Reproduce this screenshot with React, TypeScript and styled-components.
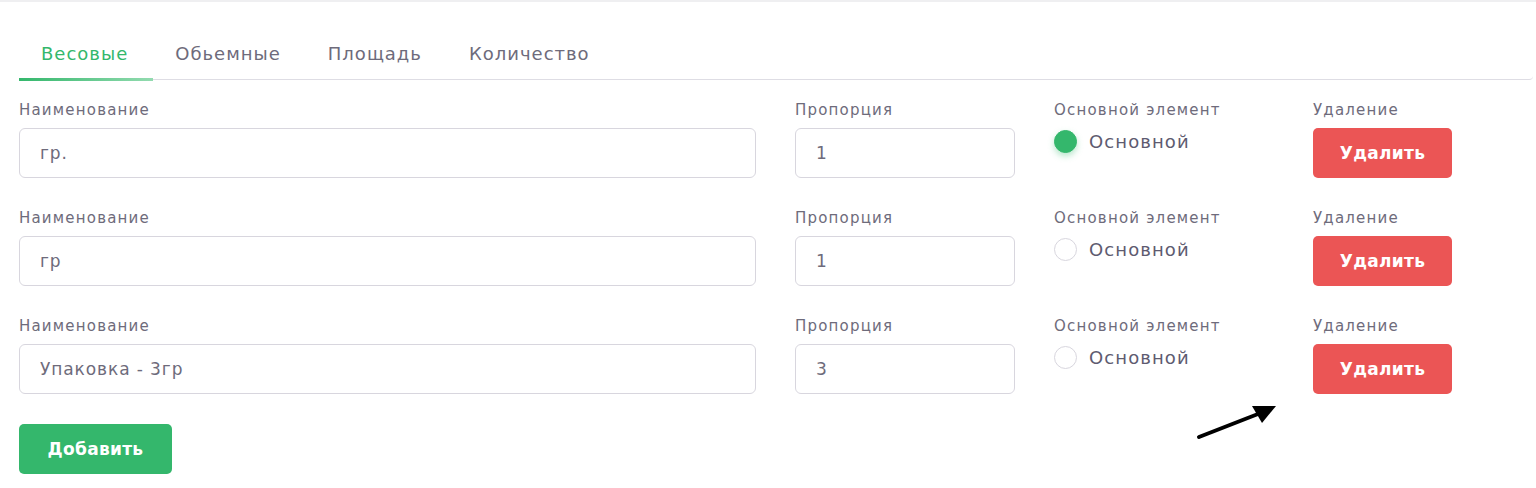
import styled, { createGlobalStyle } from "styled-components";

const GlobalStyle = createGlobalStyle`
  body {
    margin: 0;
    background: #ffffff;
    font-family: "DejaVu Sans", "Noto Sans", sans-serif;
  }
`;

const tabs = ["Весовые", "Обьемные", "Площадь", "Количество"];

const rows = [
  { name: "гр.", proportion: "1", main: true },
  { name: "гр", proportion: "1", main: false },
  { name: "Упаковка - 3гр", proportion: "3", main: false },
];

const Field = ({ label, children }) => (
  <Column>
    <Label>{label}</Label>
    {children}
  </Column>
);

const UnitRow = ({ row }) => (
  <Row>
    <Field label="Наименование">
      <Input defaultValue={row.name} />
    </Field>

    <Field label="Пропорция">
      <Input defaultValue={row.proportion} />
    </Field>

    <Field label="Основной элемент">
      <RadioLabel>
        <Radio checked={row.main} />
        Основной
      </RadioLabel>
    </Field>

    <Field label="Удаление">
      <Button color="#eb5555">Удалить</Button>
    </Field>
  </Row>
);

const App = () => {
  return (
    <>
      <GlobalStyle />
      <Card>
        <TabBar>
          {tabs.map((tab, i) => (
            <Tab key={tab} active={i === 0}>{tab}</Tab>
          ))}
        </TabBar>

        <Rows>
          {rows.map((row, i) => (
            <UnitRow key={i} row={row} />
          ))}
        </Rows>

        <Button color="#34b76c" wide>Добавить</Button>

        <Arrow width="90" height="40" viewBox="0 0 90 40">
          <line x1="3" y1="36" x2="62" y2="13" stroke="#000" strokeWidth="4" strokeLinecap="round" />
          <polygon points="80,5 56,5 66,22" fill="#000" />
        </Arrow>
      </Card>
    </>
  );
};

const Card = styled.div`
  position: relative;
  border-top: 2px solid #efeff1;
  padding: 39px 3px 14px 19px;
  height: 488px;
  box-sizing: border-box;
`;

const TabBar = styled.div`
  display: flex;
  border-bottom: 1px solid #dedde4;
  border-bottom-right-radius: 4px;
  margin-bottom: 20px;
`;

const Tab = styled.div<{ active?: boolean }>`
  position: relative;
  padding: 1px 25px 13px 22px;
  font-size: 18px;
  line-height: 24px;
  letter-spacing: 1px;
  color: ${p => (p.active ? "#34b76c" : "#6e6b7b")};

  &::after {
    content: "";
    display: ${p => (p.active ? "block" : "none")};
    position: absolute;
    left: 0;
    right: 0;
    bottom: -2px;
    height: 3px;
    background: linear-gradient(90deg, #34b76c, #93dbb0);
  }
`;

const Rows = styled.div`
  display: flex;
  flex-direction: column;
  gap: 30px;
  margin-bottom: 30px;
`;

const Row = styled.div`
  display: grid;
  grid-template-columns: 737px 220px 220px 220px;
  column-gap: 39px;
`;

const Column = styled.div`
  display: flex;
  flex-direction: column;
`;

const Label = styled.label`
  font-size: 15px;
  line-height: 20px;
  letter-spacing: 1.2px;
  color: #6e6b7b;
  margin-bottom: 8px;
`;

const Input = styled.input`
  height: 50px;
  box-sizing: border-box;
  border: 1px solid #d8d6de;
  border-radius: 6px;
  padding: 0 20px;
  font-family: inherit;
  font-size: 17px;
  letter-spacing: 0.9px;
  color: #6e6b7b;
  outline: none;
`;

const RadioLabel = styled.div`
  display: flex;
  align-items: center;
  gap: 12px;
  font-size: 18px;
  letter-spacing: 1.1px;
  color: #5e5b70;
  margin-top: 2px;
`;

const Radio = styled.span<{ checked?: boolean }>`
  width: 23px;
  height: 23px;
  box-sizing: border-box;
  border-radius: 50%;
  border: 1px solid ${p => (p.checked ? "#34b76c" : "#d8d6de")};
  background: ${p => (p.checked ? "#34b76c" : "#fff")};
  box-shadow: ${p => (p.checked ? "0 3px 6px rgba(52, 183, 108, 0.35)" : "none")};
`;

const Button = styled.button<{ color: string; wide?: boolean }>`
  width: ${p => (p.wide ? "153px" : "139px")};
  height: 50px;
  border: none;
  border-radius: 5px;
  background: ${p => p.color};
  color: #fff;
  font-family: inherit;
  font-size: 17px;
  font-weight: 600;
  letter-spacing: 0.3px;
  cursor: pointer;
`;

const Arrow = styled.svg`
  position: absolute;
  left: 1196px;
  top: 399px;
`;

export default App;
